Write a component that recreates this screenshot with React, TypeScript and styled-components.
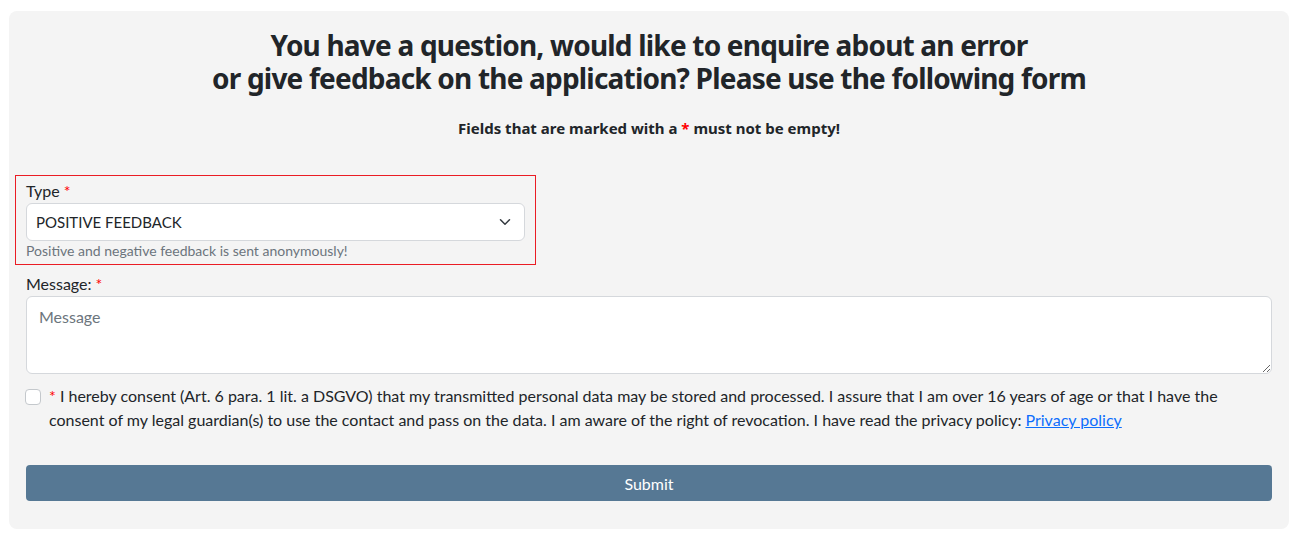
import React from "react"
import styled, { createGlobalStyle } from "styled-components"

const fontStack = `"Segoe UI", Lato, "Noto Sans", "Liberation Sans", sans-serif`
const headingStack = `"Segoe UI", "Noto Sans", "Open Sans", sans-serif`

const GlobalStyle = createGlobalStyle`
    * {
        box-sizing: border-box;
    }

    body {
        margin: 0;
        background: #ffffff;
        font-family: ${fontStack};
        color: #212529;
    }
`

const Card = styled.form`
    margin: 11px 13px 0 9px;
    padding: 18px 17px 28px 17px;
    background: #f4f4f4;
    border-radius: 8px;
`

const Title = styled.h3`
    margin: 0;
    font-family: ${headingStack};
    font-size: 28px;
    line-height: 33px;
    letter-spacing: -0.8px;
    font-weight: 700;
    text-align: center;
    color: #212529;
`

const Notice = styled.p`
    margin: 22px 0 0 0;
    font-family: ${headingStack};
    font-size: 15px;
    line-height: 22px;
    font-weight: 700;
    text-align: center;
`

const Required = styled.span`
    color: #ff0000;
`

const TypeGroup = styled.div`
    width: 521px;
    margin: 36px 0 0 -11px;
    padding: 3px 10px 5px 10px;
    border: 1px solid #ea1c24;
`

const Label = styled.label`
    display: block;
    font-size: 16px;
    line-height: 24px;
`

const SelectWrap = styled.div`
    height: 38px;
    background: #ffffff;
    border: 1px solid #d5d8dc;
    border-radius: 6px;
    display: flex;
    align-items: center;
    padding: 0 13px 0 9px;
    font-size: 15px;
`

const SelectValue = styled.span`
    flex: 1;
`

const Chevron = styled.svg`
    width: 12px;
    height: 12px;
    color: #343a40;
`

const Hint = styled.div`
    margin-top: 2px;
    font-size: 14px;
    line-height: 16px;
    color: #6c757d;
`

const MessageGroup = styled.div`
    margin-top: 7px;
`

const TextArea = styled.textarea`
    display: block;
    width: 100%;
    height: 78px;
    padding: 8px 12px;
    font-family: ${fontStack};
    font-size: 16px;
    line-height: 24px;
    border: 1px solid #d5d8dc;
    border-radius: 6px;
    background: #ffffff;
    resize: vertical;

    &::placeholder {
        color: #6c757d;
    }
`

const ConsentRow = styled.div`
    display: flex;
    gap: 8px;
    margin-top: 10px;
`

const Check = styled.input.attrs({ type: "checkbox" })`
    appearance: none;
    flex: none;
    width: 16px;
    height: 16px;
    margin: 5px 0 0 -1px;
    background: #ffffff;
    border: 1px solid #c4c8cc;
    border-radius: 4px;
`

const ConsentText = styled.label`
    font-size: 16px;
    line-height: 24px;
`

const Link = styled.a`
    color: #0d6efd;
    text-decoration: underline;
`

const SubmitButton = styled.button`
    display: block;
    width: 100%;
    height: 36px;
    margin-top: 33px;
    border: none;
    border-radius: 4px;
    background: #567894;
    color: #ffffff;
    font-family: ${fontStack};
    font-size: 16px;
`

export default function App() {
    return (
        <>
            <GlobalStyle />
            <Card onSubmit={e => e.preventDefault()}>
                <Title>
                    You have a question, would like to enquire about an error
                    <br />
                    or give feedback on the application? Please use the following form
                </Title>
                <Notice>
                    Fields that are marked with a <Required>*</Required> must not be empty!
                </Notice>
                <TypeGroup>
                    <Label>
                        Type <Required>*</Required>
                    </Label>
                    <SelectWrap>
                        <SelectValue>POSITIVE FEEDBACK</SelectValue>
                        <Chevron viewBox="0 0 16 16" fill="none" stroke="currentColor" strokeWidth="2" strokeLinecap="round" strokeLinejoin="round">
                            <path d="M2 5l6 6 6-6" />
                        </Chevron>
                    </SelectWrap>
                    <Hint>Positive and negative feedback is sent anonymously!</Hint>
                </TypeGroup>
                <MessageGroup>
                    <Label>
                        Message: <Required>*</Required>
                    </Label>
                    <TextArea placeholder="Message" />
                </MessageGroup>
                <ConsentRow>
                    <Check id="consent" />
                    <ConsentText htmlFor="consent">
                        <Required>*</Required> I hereby consent (Art. 6 para. 1 lit. a DSGVO) that my transmitted personal data may be stored and processed. I assure that I am over 16 years of age or that I have the consent of my legal guardian(s) to use the contact and pass on the data. I am aware of the right of revocation. I have read the privacy policy: <Link href="#">Privacy policy</Link>
                    </ConsentText>
                </ConsentRow>
                <SubmitButton type="submit">Submit</SubmitButton>
            </Card>
        </>
    )
}
